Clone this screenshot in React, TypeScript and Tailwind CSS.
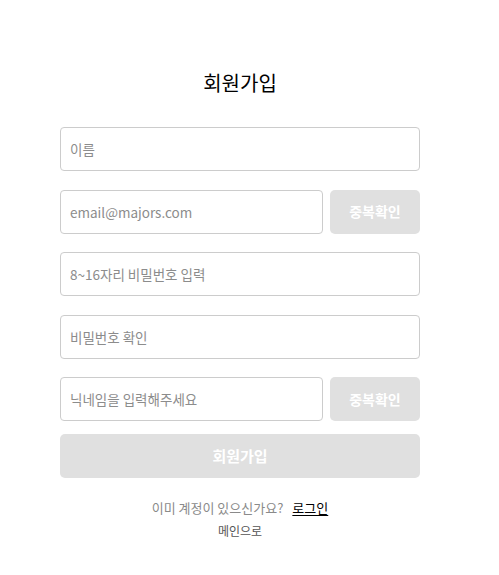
const font = "font-['Noto_Sans_CJK_KR','Noto_Sans',sans-serif]";

function Field({ placeholder }: { placeholder: string }) {
  return (
    <input
      placeholder={placeholder}
      className="h-[44px] w-full min-w-0 rounded-[4px] border border-[#cccccc] bg-white px-[9px] text-[13.5px] text-[#333] outline-none placeholder:text-[#8c8c8c]"
    />
  );
}

function CheckButton() {
  return (
    <button className="h-[44px] w-[90px] shrink-0 rounded-[5px] bg-[#e0e0e0] text-[14px] font-bold text-white">
      중복확인
    </button>
  );
}

export default function App() {
  return (
    <div className={`min-h-screen bg-white ${font}`}>
      <div className="ml-[60px] flex w-[360px] flex-col pt-[66px]">
        <h1 className="mb-[27px] text-center text-[20px] leading-[34px] font-normal text-black">회원가입</h1>

        <div className="flex flex-col gap-[18.5px]">
          <Field placeholder="이름" />
          <div className="flex gap-[7px]">
            <Field placeholder="email@majors.com" />
            <CheckButton />
          </div>
          <Field placeholder="8~16자리 비밀번호 입력" />
          <Field placeholder="비밀번호 확인" />
          <div className="flex gap-[7px]">
            <Field placeholder="닉네임을 입력해주세요" />
            <CheckButton />
          </div>
        </div>

        <button className="mt-[13px] h-[44px] w-full rounded-[5px] bg-[#e0e0e0] text-[15px] font-bold text-white">
          회원가입
        </button>

        <div className="mt-[20px] flex flex-col items-center gap-[3px] leading-[20px]">
          <p className="text-[13px] text-[#8a8a8a]">
            이미 계정이 있으신가요?
            <a className="ml-[9px] text-black underline underline-offset-2">로그인</a>
          </p>
          <a className="text-[12px] text-[#555]">메인으로</a>
        </div>
      </div>
    </div>
  );
}
